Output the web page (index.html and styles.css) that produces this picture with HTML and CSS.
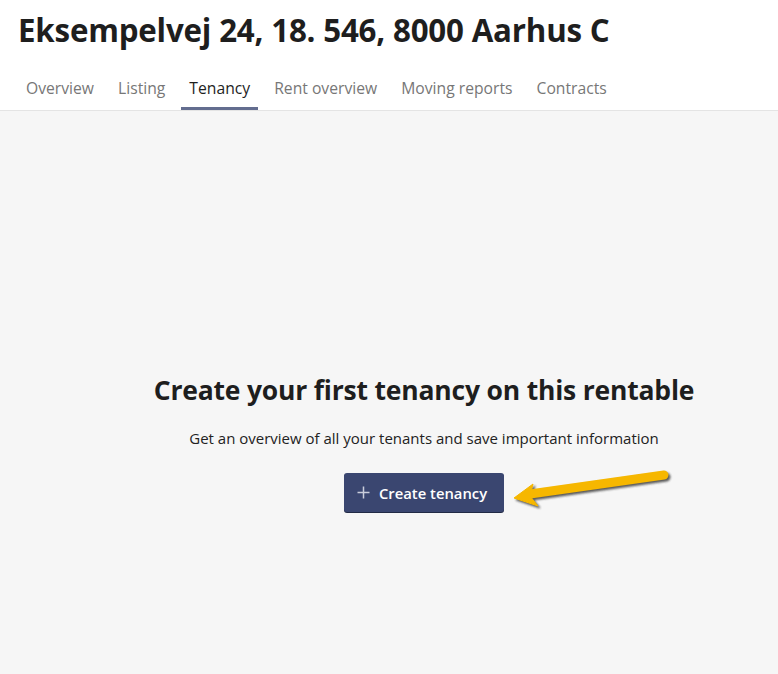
FILE: index.html
```html
<!DOCTYPE html>
<html>
<head>
<meta charset="utf-8">
<link rel="stylesheet" href="styles.css">
</head>
<body>
<div class="page">
  <header class="header">
    <h1 class="title">Eksempelvej 24, 18. 546, 8000 Aarhus C</h1>
    <nav class="tabs">
      <a class="tab">Overview</a>
      <a class="tab">Listing</a>
      <a class="tab active">Tenancy</a>
      <a class="tab">Rent overview</a>
      <a class="tab">Moving reports</a>
      <a class="tab">Contracts</a>
    </nav>
  </header>
  <main class="content">
    <div class="empty">
      <h2 class="empty-title">Create your first tenancy on this rentable</h2>
      <p class="empty-text">Get an overview of all your tenants and save important information</p>
      <button class="btn"><svg class="plus" width="13" height="13" viewBox="0 0 13 13"><path d="M6.5 0.5V12.5M0.5 6.5H12.5" stroke="#c9cddb" stroke-width="1.5" fill="none"/></svg>Create tenancy</button>
    </div>
  </main>
  <svg class="arrow" width="778" height="674" viewBox="0 0 778 674">
    <defs>
      <filter id="sh" x="-20%" y="-50%" width="140%" height="200%">
        <feGaussianBlur stdDeviation="1.2"/>
      </filter>
    </defs>
    <g transform="translate(2,2)" fill="#333" stroke="#333" filter="url(#sh)" opacity="0.8">
      <line x1="664" y1="475" x2="530" y2="494" stroke-width="9" stroke-linecap="round"/>
      <polygon points="514,498 533,484 530,496 538,506" stroke-width="1" stroke-linejoin="round"/>
    </g>
    <g fill="#f6b700" stroke="#f6b700">
      <line x1="664" y1="475" x2="530" y2="494" stroke-width="9" stroke-linecap="round"/>
      <polygon points="514,498 533,484 530,496 538,506" stroke-width="1" stroke-linejoin="round"/>
    </g>
  </svg>
</div>
</body>
</html>
```
FILE: styles.css
```css
html, body {
  margin: 0;
  padding: 0;
}
body {
  font-family: "Open Sans", "Noto Sans", "Liberation Sans", sans-serif;
  background: #f6f6f6;
  color: #222;
  width: 778px;
  height: 674px;
  overflow: hidden;
}
.page {
  position: relative;
  width: 778px;
  height: 674px;
  display: flex;
  flex-direction: column;
}
.header {
  background: #fff;
  border-bottom: 1px solid #e4e4e4;
  padding: 0 0 0 18px;
}
.title {
  margin: 0;
  padding-top: 8px;
  height: 48px;
  font-size: 31.3px;
  font-weight: 700;
  line-height: 44px;
  color: #1e1e1e;
  letter-spacing: -0.2px;
}
.tabs {
  display: flex;
  margin-top: 17px;
  gap: 8px;
}
.tab {
  display: block;
  padding: 0 8px;
  height: 37px;
  line-height: 30px;
  font-size: 15.7px;
  color: #777;
  box-sizing: border-box;
  border-bottom: 3px solid transparent;
}
.tab.active {
  color: #1e1e1e;
  border-bottom-color: #636d8f;
}
.content {
  flex: 1;
  display: flex;
  justify-content: center;
  padding-left: 70px;
}
.empty {
  display: flex;
  flex-direction: column;
  align-items: center;
  padding-top: 262px;
}
.empty-title {
  margin: 0;
  font-size: 26.5px;
  font-weight: 700;
  line-height: 34px;
  color: #1e1e1e;
  letter-spacing: -0.2px;
}
.empty-text {
  margin: 21px 0 0;
  font-size: 15px;
  line-height: 20px;
  color: #222;
}
.btn {
  margin-top: 25px;
  width: 160px;
  height: 39px;
  border: none;
  border-radius: 3px;
  background: #3a4670;
  box-shadow: 0 1px 0 #222a45;
  color: #fff;
  font-family: inherit;
  font-size: 14.8px;
  font-weight: 600;
  display: flex;
  align-items: center;
  justify-content: center;
  padding: 0 4px 0 0;
}
.plus {
  margin-right: 9px;
  display: block;
}
.arrow {
  position: absolute;
  left: 0;
  top: 0;
  pointer-events: none;
}
```
